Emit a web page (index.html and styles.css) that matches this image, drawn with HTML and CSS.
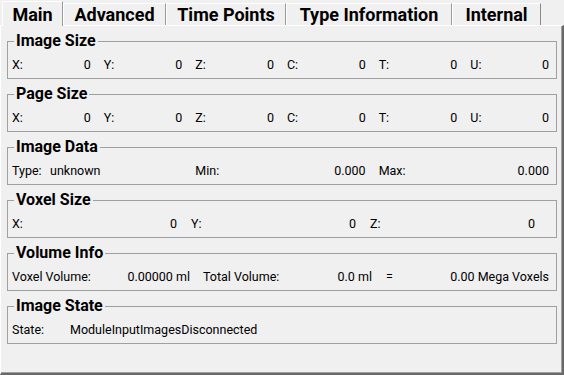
FILE: index.html
```html
<!DOCTYPE html>
<html lang="en">
<head>
    <meta charset="UTF-8">
    <title>Image Info</title>
    <link rel="stylesheet" href="styles.css">
</head>
<body>
    <div class="tabs">
        <div class="tab tab-main active">Main</div>
        <div class="tab tab-advanced">Advanced</div>
        <div class="tab tab-time">Time Points</div>
        <div class="tab tab-type">Type Information</div>
        <div class="tab tab-internal">Internal</div>
    </div>
    <div class="pane">
        <fieldset class="group">
            <legend>Image Size</legend>
            <div class="row six">
                <div class="cell"><span>X:</span><span>0</span></div>
                <div class="cell"><span>Y:</span><span>0</span></div>
                <div class="cell"><span>Z:</span><span>0</span></div>
                <div class="cell"><span>C:</span><span>0</span></div>
                <div class="cell"><span>T:</span><span>0</span></div>
                <div class="cell"><span>U:</span><span>0</span></div>
            </div>
        </fieldset>
        <fieldset class="group">
            <legend>Page Size</legend>
            <div class="row six">
                <div class="cell"><span>X:</span><span>0</span></div>
                <div class="cell"><span>Y:</span><span>0</span></div>
                <div class="cell"><span>Z:</span><span>0</span></div>
                <div class="cell"><span>C:</span><span>0</span></div>
                <div class="cell"><span>T:</span><span>0</span></div>
                <div class="cell"><span>U:</span><span>0</span></div>
            </div>
        </fieldset>
        <fieldset class="group">
            <legend>Image Data</legend>
            <div class="row six">
                <div class="cell span2 left"><span class="type-label">Type:</span><span>unknown</span></div>
                <div class="cell span2"><span>Min:</span><span>0.000</span></div>
                <div class="cell span2"><span>Max:</span><span>0.000</span></div>
            </div>
        </fieldset>
        <fieldset class="group">
            <legend>Voxel Size</legend>
            <div class="row three">
                <div class="cell"><span>X:</span><span>0</span></div>
                <div class="cell"><span>Y:</span><span>0</span></div>
                <div class="cell"><span>Z:</span><span>0</span></div>
            </div>
        </fieldset>
        <fieldset class="group">
            <legend>Volume Info</legend>
            <div class="row volume">
                <div class="cell"><span>Voxel Volume:</span><span>0.00000 ml</span></div>
                <div class="cell"><span>Total Volume:</span><span>0.0 ml</span></div>
                <div class="equals">=</div>
                <div class="cell right"><span>0.00 Mega Voxels</span></div>
            </div>
        </fieldset>
        <fieldset class="group">
            <legend>Image State</legend>
            <div class="row">
                <div class="cell left"><span class="state-label">State:</span><span>ModuleInputImagesDisconnected</span></div>
            </div>
        </fieldset>
    </div>
</body>
</html>
```

FILE: styles.css
```css
body {
    margin: 0;
    background-color: #f0f0f0;
    font-family: Roboto, "DejaVu Sans", sans-serif;
    font-size: 12.5px;
    color: #000000;
}

/* Tab bar */
.tabs {
    display: flex;
    align-items: flex-end;
    height: 25px;
    padding-left: 2px;
}

.tab {
    box-sizing: border-box;
    height: 22px;
    padding-top: 1px;
    line-height: 20px;
    text-align: center;
    font-weight: bold;
    font-size: 18px;
    border-top: 1px solid #ffffff;
    border-left: 1px solid #ffffff;
    border-right: 1px solid #9a9a9a;
    white-space: nowrap;
}

.tab.active {
    height: 25px;
    padding-top: 3px;
    margin-bottom: -1px;
    background-color: #f0f0f0;
    position: relative;
    z-index: 1;
}

.tab-main { width: 61px; }
.tab-advanced { width: 103px; }
.tab-time { width: 120px; }
.tab-type { width: 166px; }
.tab-internal { width: 89px; border-right-color: #8a8a8a; }

/* Page under the tabs */
.pane {
    box-sizing: border-box;
    height: 350px;
    padding: 7px 5px 0 6px;
    border-top: 1px solid #ffffff;
    border-left: 1px solid #ffffff;
    border-right: 2px solid #696969;
    border-bottom: 2px solid #696969;
    box-shadow: inset -1px -1px 0 #a0a0a0;
}

.group {
    margin: 0 0 7px 0;
    padding: 9px 7px 6px 4px;
    border: 1px solid #a0a0a0;
    min-width: 0;
}

.group legend {
    margin-left: 2px;
    padding: 0 2px;
    line-height: 16px;
    font-size: 16px;
    font-weight: bold;
}

.row {
    line-height: 14px;
    height: 14px;
}

.row.six {
    display: grid;
    grid-template-columns: repeat(6, 1fr);
    column-gap: 13px;
}

.row.three {
    display: grid;
    grid-template-columns: repeat(3, 165px);
    column-gap: 14px;
}

.row.volume {
    display: grid;
    grid-template-columns: 178px 169px auto 1fr;
    column-gap: 13px;
}

.cell {
    display: flex;
    justify-content: space-between;
    white-space: nowrap;
}

.cell.span2 {
    grid-column: span 2;
}

.cell.left {
    justify-content: flex-start;
}

.cell.right {
    justify-content: flex-end;
}

.equals {
    padding-left: 1px;
}

.type-label {
    width: 38px;
}

.state-label {
    width: 58px;
}
```
